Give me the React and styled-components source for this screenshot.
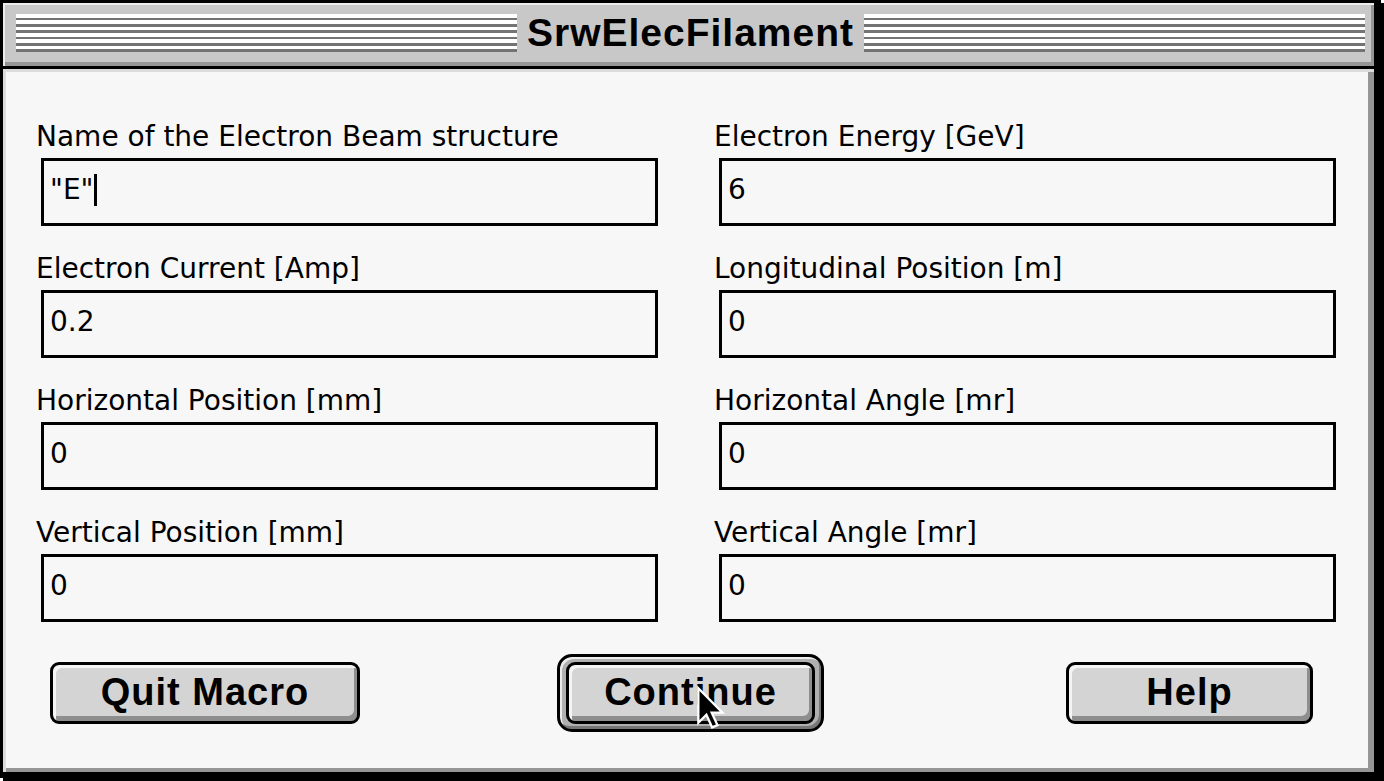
import React from 'react';
import styled, { createGlobalStyle } from 'styled-components';

const GlobalStyle = createGlobalStyle`
  html, body {
    margin: 0;
    padding: 0;
    background: #ffffff;
  }
  #root {
    width: 1384px;
    height: 781px;
    overflow: hidden;
  }
`;

const Window = styled.div`
  position: relative;
  box-sizing: border-box;
  width: 1381px;
  height: 778px;
  display: flex;
  flex-direction: column;
  border-style: solid;
  border-color: #000;
  border-width: 3px 7px 6px 3px;
  box-shadow: 3px 3px 0 #000;
`;

const TitleBar = styled.div`
  flex: none;
  box-sizing: border-box;
  height: 66px;
  display: flex;
  align-items: center;
  padding: 0 9px 4px 13px;
  background: #c8c8c8;
  border-bottom: 3px solid #000;
  box-shadow: inset 2px 2px 0 #ececec, inset -3px -4px 0 #969696;
`;

const Stripes = styled.div`
  flex: 1;
  height: 38px;
  background: repeating-linear-gradient(
    to bottom,
    #ffffff 0,
    #ffffff 3.8px,
    #737373 3.8px,
    #737373 6.3px
  );
`;

const Title = styled.h1`
  margin: 0 10px;
  font: bold 39px/1 "Liberation Sans", Arial, sans-serif;
  letter-spacing: 1px;
  color: #000;
  white-space: nowrap;
`;

const Content = styled.div`
  flex: 1;
  display: flex;
  flex-direction: column;
  padding: 52px 38px 0 33px;
  background: #f7f7f7;
  box-shadow: inset 3px 3px 0 #dcdcdc, inset -6px -4px 0 #969696;
`;

const FieldGrid = styled.div`
  display: grid;
  grid-template-columns: 622px 622px;
  column-gap: 56px;
  row-gap: 27px;
`;

const Field = styled.div`
  display: flex;
  flex-direction: column;
  gap: 5px;
`;

const Label = styled.label`
  height: 32px;
  font: 28px/32px "DejaVu Sans", Verdana, sans-serif;
  color: #000;
  white-space: nowrap;
`;

const TextBox = styled.div`
  box-sizing: border-box;
  height: 68px;
  margin-left: 5px;
  display: flex;
  align-items: center;
  padding: 0 6px 5px;
  border: 3px solid #000;
  background: #f7f7f7;
  font: 28px/32px "DejaVu Sans", Verdana, sans-serif;
  color: #000;
`;

const Caret = styled.span`
  display: inline-block;
  width: 3px;
  height: 32px;
  margin-left: 1px;
  background: #000;
`;

const ButtonRow = styled.div`
  display: flex;
  align-items: center;
  margin-top: 32px;
`;

const MacButton = styled.button`
  box-sizing: border-box;
  width: ${p => p.$w}px;
  height: 62px;
  margin-left: ${p => p.$ml || 0}px;
  padding: 0 0 3px;
  border: 3px solid #000;
  border-radius: 9px;
  background: #d4d4d4;
  box-shadow: inset 3px 3px 0 #f4f4f4, inset -3px -5px 0 #8e8e8e;
  font: bold 38px/1 "Liberation Sans", Arial, sans-serif;
  letter-spacing: 1px;
  color: #000;
  cursor: default;
`;

const DefaultRing = styled.div`
  display: flex;
  margin-left: ${p => p.$ml}px;
  padding: 5px 6px;
  border: 3px solid #000;
  border-radius: 15px;
  background: #b0b0b0;
  box-shadow: inset 2px 2px 0 #ececec, inset -2px -3px 0 #777;
`;

const Pointer = styled.svg`
  position: absolute;
  left: 693px;
  top: 683px;
  pointer-events: none;
`;

const fields = [
  { label: 'Name of the Electron Beam structure', value: '"E"', active: true },
  { label: 'Electron Energy [GeV]', value: '6' },
  { label: 'Electron Current [Amp]', value: '0.2' },
  { label: 'Longitudinal Position [m]', value: '0' },
  { label: 'Horizontal Position [mm]', value: '0' },
  { label: 'Horizontal Angle [mr]', value: '0' },
  { label: 'Vertical Position [mm]', value: '0' },
  { label: 'Vertical Angle [mr]', value: '0' },
];

function App() {
  return (
    <>
      <GlobalStyle />
      <Window>
        <TitleBar>
          <Stripes />
          <Title>SrwElecFilament</Title>
          <Stripes />
        </TitleBar>
        <Content>
          <FieldGrid>
            {fields.map(f => (
              <Field key={f.label}>
                <Label>{f.label}</Label>
                <TextBox>
                  {f.value}
                  {f.active && <Caret />}
                </TextBox>
              </Field>
            ))}
          </FieldGrid>
          <ButtonRow>
            <MacButton $w={310} $ml={14}>Quit Macro</MacButton>
            <DefaultRing $ml={197}>
              <MacButton $w={249}>Continue</MacButton>
            </DefaultRing>
            <MacButton $w={247} $ml={242}>Help</MacButton>
          </ButtonRow>
        </Content>
        <Pointer width="30" height="46" viewBox="0 0 13 20">
          <path
            d="M1 1 V16 L4.5 12.5 L7 18 L9.3 17 L6.8 11.6 H11.5 Z"
            fill="#000"
            stroke="#fff"
            strokeWidth="1"
            strokeLinejoin="miter"
          />
        </Pointer>
      </Window>
    </>
  );
}

export default App;
